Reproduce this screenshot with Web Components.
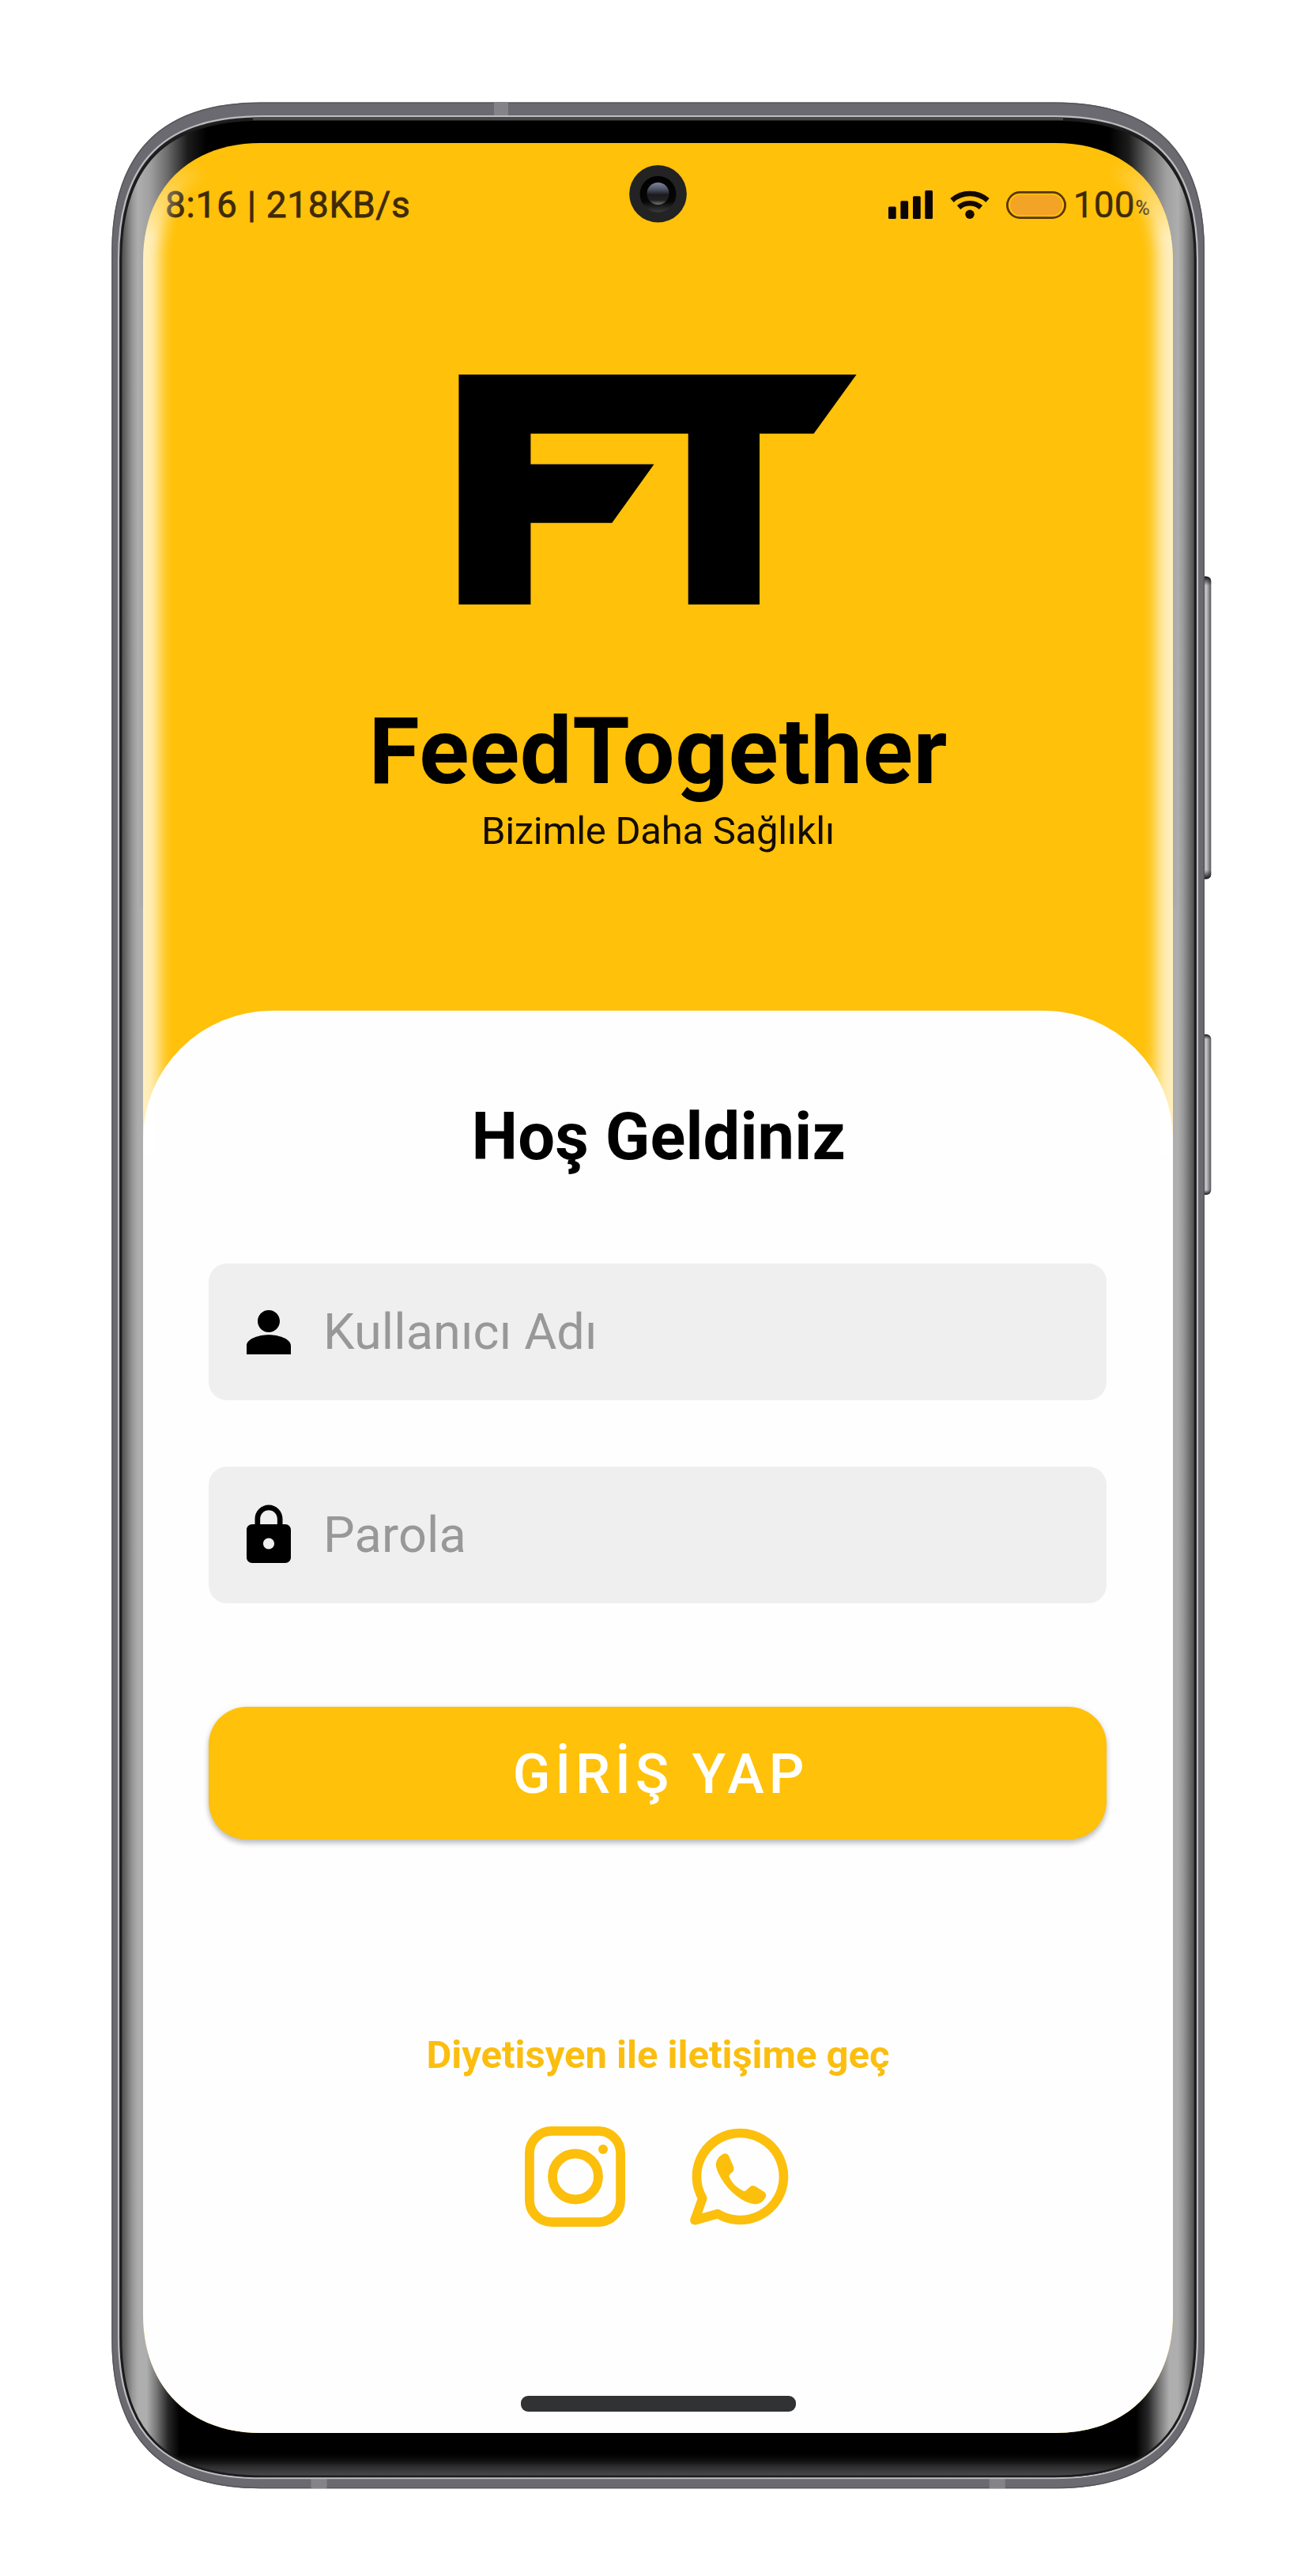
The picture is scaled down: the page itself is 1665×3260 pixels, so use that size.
<!DOCTYPE html>
<html lang="tr">
<head>
<meta charset="utf-8">
<title>FeedTogether</title>
<style>
html,body{margin:0;padding:0;background:#fff}
body{font-family:Roboto,"Noto Sans",sans-serif;color:#000}
</style>
</head>
<body>
<phone-frame>
  <login-app></login-app>
</phone-frame>
<script>
const define = (name, html, ready) => {
  const tpl = document.createElement('template');
  tpl.innerHTML = html;
  customElements.define(name, class extends HTMLElement {
    connectedCallback() {
      if (this.shadowRoot) return;
      this.attachShadow({mode: 'open'}).appendChild(tpl.content.cloneNode(true));
      if (ready) ready(this, this.shadowRoot);
    }
  });
};

/* A line of text tracked so that its ink spans the width given in "ink". */
define('fit-text', `
<style>:host{display:block;white-space:nowrap;flex:none}span{display:inline-block}</style>
<span><slot></slot></span>`, (host, root) => {
  const ink = parseFloat(host.getAttribute('ink'));
  if (!ink) return;
  const cs = getComputedStyle(host);
  const ctx = document.createElement('canvas').getContext('2d');
  ctx.font = `${cs.fontWeight} ${cs.fontSize} ${cs.fontFamily}`;
  const text = host.textContent.trim();
  if (text.length < 2) return;
  const m = ctx.measureText(text);
  const ls = (ink - m.actualBoundingBoxLeft - m.actualBoundingBoxRight) / (text.length - 1);
  const span = root.querySelector('span');
  span.style.letterSpacing = ls + 'px';
  span.style.marginRight = -ls + 'px';
});

define('signal-icon', `
<style>:host{display:block;width:56px;height:36px}svg{display:block}</style>
<svg width="56" height="36" fill="#0b0508"><rect y="20.5" width="9.7" height="15.5" rx="1.5"/><rect x="15.4" y="13.2" width="9.7" height="22.8" rx="1.5"/><rect x="31" y="7.2" width="9.7" height="28.8" rx="1.5"/><rect x="46.3" width="9.7" height="36" rx="1.5"/></svg>`);

define('wifi-icon', `
<style>:host{display:block;width:50px;height:36px}svg{display:block}</style>
<svg width="50" height="36"><g fill="none" stroke="#140a00" stroke-width="6.6"><path d="M2.5 12.5Q12 4 25 4T47.5 12.5"/><path d="M11 21.5Q17 16.3 25 16.3T39 21.5"/></g><circle cx="25" cy="30.2" r="5.7" fill="#140a00"/></svg>`);

define('battery-icon', `
<style>:host{display:block;width:76px;height:35px}svg{display:block}</style>
<svg width="76" height="35"><rect x="1.4" y="1.4" width="73.2" height="32.2" rx="16.1" fill="#ffc109" stroke="#583404" stroke-width="2.8"/><rect x="5" y="4.5" width="66" height="26" rx="13" fill="#f3a426"/></svg>`);

define('status-bar', `
<style>
:host{display:flex;justify-content:space-between;align-items:center;height:60px;padding:48px 29px 0 28px;color:#3f2a08;font-size:46px;line-height:60px}
.clock{-webkit-text-stroke:.8px #3f2a08}
.right{display:flex;align-items:center}
wifi-icon{margin-left:22px}
battery-icon{margin:1px 9px 0 20.500px}
.num{-webkit-text-stroke:.4px #3f2a08}
.pct{font-size:25px;margin:10px 0 0 1px;font-weight:500}
</style>
<fit-text class="clock" ink="306">8:16 | 218KB/s</fit-text>
<div class="right"><signal-icon></signal-icon><wifi-icon></wifi-icon><battery-icon></battery-icon><fit-text class="num" ink="73">100</fit-text><fit-text class="pct">%</fit-text></div>`);

define('brand-header', `
<style>
:host{display:flex;flex-direction:column;align-items:center;height:990px}
svg{display:block;margin:185.300px 1.500px 0 0}
.name{font-size:117px;font-weight:700;line-height:130px;margin-top:120.4px}
.tag{font-size:49px;line-height:60px;margin-top:6px;color:#140c00}
</style>
<svg width="504" height="291" viewBox="0 0 504 291"><path d="M.4 0H503.6L449.6 74.7H381V291H290.7V74.7H91.4V113.4H247.5L194.3 187.7H91.4V291H.4Z"/></svg>
<fit-text class="name" ink="724">FeedTogether</fit-text>
<fit-text class="tag" ink="440">Bizimle Daha Sağlıklı</fit-text>`);

define('text-field', `
<style>
:host{display:flex;align-items:center;box-sizing:border-box;height:173.4px;border-radius:23px;background:#efefef;padding-left:34px;color:#989898;font-size:63px;line-height:80px}
.icon{width:84px;height:84px;margin-right:27px;flex:none}
::slotted(svg){display:block;width:84px;height:84px}
</style>
<div class="icon"><slot name="icon"></slot></div><slot></slot>`);

define('primary-button', `
<style>
:host{display:flex;align-items:center;justify-content:center;box-sizing:border-box;padding:1px 0 0 2px;height:167.5px;border-radius:48px;background:#ffc109;color:#fff;font-size:70px;font-weight:500;line-height:80px;box-shadow:0 5px 6px rgba(0,0,0,.2),0 1px 8px rgba(0,0,0,.1)}
</style>
<slot></slot>`);

define('instagram-link', `
<style>:host{display:block}svg{display:block}</style>
<svg width="127" height="127" fill="none" stroke="#fcbf0b" stroke-width="11.8"><rect x="5.9" y="5.9" width="115.2" height="115.2" rx="28"/><circle cx="64" cy="63.5" r="29"/><circle cx="99" cy="29" r="6" fill="#fcbf0b" stroke="none"/></svg>`);

define('whatsapp-link', `
<style>:host{display:block}svg{display:block}</style>
<svg width="125" height="127" viewBox="873 2691 125 127"><path d="M888.8 2782A55 55 0 1 1 908 2801.6L879 2809.8Z" fill="none" stroke="#fcbf0b" stroke-width="11.6" stroke-linejoin="round"/><path d="M914 2726.5Q919 2723.5 922 2728L928 2742Q929.500 2746.500 926 2749.500Q922 2752 922.500 2754.500Q927 2766 940 2772.500Q942.500 2774 945 2771L949.500 2767Q952 2765 956 2767L967 2774Q970.500 2777 968.500 2781Q964 2789.500 955 2789.500Q943 2788 932 2779Q920 2770 912 2756Q905.500 2745 905.700 2738Q907 2730.500 914 2726.500Z" fill="#fcbf0b"/></svg>`);

define('login-sheet', `
<style>
:host{display:flex;flex-direction:column;align-items:center;box-sizing:border-box;height:1801px;background:#fefefe;border-radius:163px 163px 0 0;padding-top:110.300px}
h1{margin:0;font-size:83px;font-weight:700;line-height:100px;padding-left:1px}
form{width:1136px;margin:109.700px 1px 0 0;display:flex;flex-direction:column;gap:83.500px}
primary-button{margin-top:47.600px}
.contact{font-size:49px;font-weight:700;line-height:60px;color:#fbbe10;margin-top:243.500px}
.social{display:flex;gap:82px;margin:60px 4px 0 0}
.home{width:348px;height:20px;border-radius:9px;background:#303234;margin-top:213.500px}
</style>
<h1><fit-text ink="466">Hoş Geldiniz</fit-text></h1>
<form>
<text-field><svg slot="icon" viewBox="0 0 24 24"><path d="M12 12c2.210 0 4-1.790 4-4s-1.790-4-4-4-4 1.790-4 4 1.790 4 4 4zm0 .9c-3.200 0-8 1.300-8 3.900v3.200h16v-3.200c0-2.600-4.800-3.900-8-3.900z"/></svg><fit-text ink="337">Kullanıcı Adı</fit-text></text-field>
<text-field><svg slot="icon" viewBox="0 0 24 24"><path d="M18 8h-1V6c0-2.760-2.240-5-5-5S7 3.240 7 6v2H6c-1.100 0-2 .9-2 2v10c0 1.100.9 2 2 2h12c1.100 0 2-.9 2-2V10c0-1.100-.9-2-2-2zm-6 9c-1.100 0-2-.9-2-2s.9-2 2-2 2 .9 2 2-.9 2-2 2zm3.100-9H8.900V6c0-1.710 1.390-3.100 3.100-3.100s3.100 1.390 3.100 3.100v2z"/></svg><fit-text ink="172.500">Parola</fit-text></text-field>
<primary-button><fit-text ink="364">GİRİŞ YAP</fit-text></primary-button>
</form>
<fit-text class="contact" ink="582.500">Diyetisyen ile iletişime geç</fit-text>
<div class="social"><instagram-link></instagram-link><whatsapp-link></whatsapp-link></div>
<div class="home"></div>`);

define('login-app', `
<style>:host{display:block;background:#ffc109}</style>
<status-bar></status-bar><brand-header></brand-header><login-sheet></login-sheet>`);

/* The handset: body below, app in the middle, edge glare and camera above. */
define('phone-frame', `
<style>
:host{display:grid;width:1665px;height:3260px;overflow:hidden;background:#fff}
:host>*{grid-area:1/1}
svg{display:block}
.over{z-index:1;pointer-events:none}
.screen{margin:181px 181px 0 181px;width:1303px;height:2898px;overflow:hidden;clip-path:path("M0 149C0 58 58 0 149 0H1154C1245 0 1303 58 1303 149V2748C1303 2839 1245 2898 1154 2898H149C58 2898 0 2839 0 2748Z")}
</style>
<svg width="1665" height="3260">
<defs>
<linearGradient id="key" x1="0" x2="1" y1="0" y2="0"><stop offset="0" stop-color="#77777b"/><stop offset=".25" stop-color="#aaabaf"/><stop offset=".6" stop-color="#c0c1c5"/><stop offset="1" stop-color="#55555a"/></linearGradient>
<linearGradient id="keyEnds" x1="0" x2="0" y1="0" y2="1"><stop offset="0" stop-color="#111"/><stop offset=".03" stop-color="#111" stop-opacity="0"/><stop offset=".97" stop-color="#111" stop-opacity="0"/><stop offset="1" stop-color="#111"/></linearGradient>
<linearGradient id="bezel" gradientUnits="userSpaceOnUse" x1="153" x2="1512" y1="0" y2="0"><stop offset="0" stop-color="#484848"/><stop offset=".004" stop-color="#656565"/><stop offset=".011" stop-color="#999"/><stop offset=".016" stop-color="#aeaeae"/><stop offset=".024" stop-color="#aeaeae"/><stop offset=".033" stop-color="#777"/><stop offset=".044" stop-color="#262626"/><stop offset=".055" stop-color="#000"/><stop offset=".945" stop-color="#000"/><stop offset=".956" stop-color="#262626"/><stop offset=".967" stop-color="#777"/><stop offset=".976" stop-color="#aeaeae"/><stop offset=".984" stop-color="#aeaeae"/><stop offset=".989" stop-color="#999"/><stop offset=".996" stop-color="#656565"/><stop offset="1" stop-color="#484848"/></linearGradient>
<linearGradient id="bezelTop" gradientUnits="userSpaceOnUse" x1="153" x2="1512" y1="0" y2="0"><stop offset="0" stop-color="#484848"/><stop offset=".004" stop-color="#656565"/><stop offset=".011" stop-color="#999"/><stop offset=".016" stop-color="#aeaeae"/><stop offset=".027" stop-color="#a0a0a0"/><stop offset=".043" stop-color="#6c6c6c"/><stop offset=".062" stop-color="#1c1c1c"/><stop offset=".08" stop-color="#000"/><stop offset=".92" stop-color="#000"/><stop offset=".938" stop-color="#1c1c1c"/><stop offset=".957" stop-color="#6c6c6c"/><stop offset=".973" stop-color="#a0a0a0"/><stop offset=".984" stop-color="#aeaeae"/><stop offset=".989" stop-color="#999"/><stop offset=".996" stop-color="#656565"/><stop offset="1" stop-color="#484848"/></linearGradient>
<linearGradient id="chin" gradientUnits="userSpaceOnUse" x1="0" x2="0" y1="3102" y2="3134"><stop offset="0" stop-color="#000" stop-opacity="0"/><stop offset=".6" stop-color="#333335" stop-opacity=".85"/><stop offset="1" stop-color="#4c4c50"/></linearGradient>
<clipPath id="inner"><path d="M153.500 330C153.500 209 209 152 332 152H1333C1456 152 1511.500 209 1511.500 330V2957C1511.500 3078 1456 3134 1333 3134H332C209 3134 153.500 3078 153.500 2957Z"/></clipPath>
</defs>
<g><rect x="1518" y="729.500" width="14.300" height="383" rx="6" fill="url(#key)"/><rect x="1518" y="729.500" width="14.300" height="383" rx="6" fill="url(#keyEnds)"/><rect x="1518" y="1309" width="14.300" height="203" rx="6" fill="url(#key)"/><rect x="1518" y="1309" width="14.300" height="203" rx="6" fill="url(#keyEnds)"/></g>
<path d="M141.300 318C141.300 193 204 129.500 330 129.500H1335C1461 129.500 1524 193 1524 318V2961C1524 3086 1461 3149.300 1335 3149.300H330C204 3149.300 141.300 3086 141.300 2961Z" fill="#6b6a70"/>
<path d="M142 318C142 193.500 204.500 130.200 330 130.200H1335C1460.500 130.200 1523.300 193.500 1523.300 318V2961C1523.300 3085.500 1460.500 3148.600 1335 3148.600H330C204.500 3148.600 142 3085.500 142 2961Z" fill="none" stroke="#55575a" stroke-width="1.400"/>
<path d="M393.500 3137h20v12h-20zM1251.700 3137h20v12h-20zM625 130h18v16h-18z" fill="#848388"/>
<path d="M150 328C150 204 208 147.200 332 147.200H1333C1457 147.200 1515 204 1515 328V2957C1515 3080 1457 3136.200 1333 3136.200H332C208 3136.200 150 3080 150 2957Z" fill="#222" stroke="#bcbcc1" stroke-width="2.200"/>
<g clip-path="url(#inner)"><rect x="150" y="148" width="1365" height="1000" fill="url(#bezelTop)"/><rect x="150" y="1148" width="1365" height="2000" fill="url(#bezel)"/><rect x="225" y="3102" width="1215" height="34" fill="url(#chin)"/></g>
<path d="M153 330C153 209 209 151.500 332 151.500H1333C1456 151.500 1512 209 1512 330V2957C1512 3078 1456 3134 1333 3134H332C209 3134 153 3078 153 2957Z" fill="none" stroke="#1c1c1c" stroke-width="2.500"/>
<path d="M320 150.500H1345" stroke="#484a4a" stroke-width="3.500"/>
</svg>
<div class="screen"><slot></slot></div>
<svg class="over" width="1665" height="3260">
<defs>
<filter id="soft" filterUnits="userSpaceOnUse" x="100" y="100" width="1465" height="3060"><feGaussianBlur stdDeviation="9"/></filter>
<linearGradient id="fade" gradientUnits="userSpaceOnUse" x1="0" x2="0" y1="200" y2="300"><stop offset="0" stop-color="#000"/><stop offset="1" stop-color="#fff"/></linearGradient>
<mask id="fadeMask" maskUnits="userSpaceOnUse" x="0" y="0" width="1665" height="3260"><rect width="1665" height="3260" fill="url(#fade)"/></mask>
<clipPath id="glass"><path d="M181 330C181 239 239 181 330 181H1335C1426 181 1484 239 1484 330V1460H181Z"/></clipPath>
<linearGradient id="lens" x1="0" x2="0" y1="0" y2="1"><stop offset="0" stop-color="#7e859c"/><stop offset=".3" stop-color="#4f5362"/><stop offset=".55" stop-color="#1b1a1f"/><stop offset=".8" stop-color="#222"/><stop offset="1" stop-color="#777"/></linearGradient>
<linearGradient id="ring" x1="0" x2="0" y1="0" y2="1"><stop offset="0" stop-color="#000"/><stop offset=".7" stop-color="#060606"/><stop offset="1" stop-color="#3c3c3e"/></linearGradient>
</defs>
<g clip-path="url(#glass)"><g mask="url(#fadeMask)"><path d="M181 1500V330C181 269 205 225 245 200M1484 1500V330C1484 269 1460 225 1420 200" fill="none" stroke="#fff" stroke-width="42" opacity=".74" filter="url(#soft)"/></g></g>
<circle cx="832.500" cy="245.300" r="36.300" fill="#232324"/><circle cx="832.500" cy="245.800" r="23" fill="url(#ring)"/><circle cx="832.500" cy="245" r="14" fill="url(#lens)"/>
</svg>`);
</script>
</body>
</html>
